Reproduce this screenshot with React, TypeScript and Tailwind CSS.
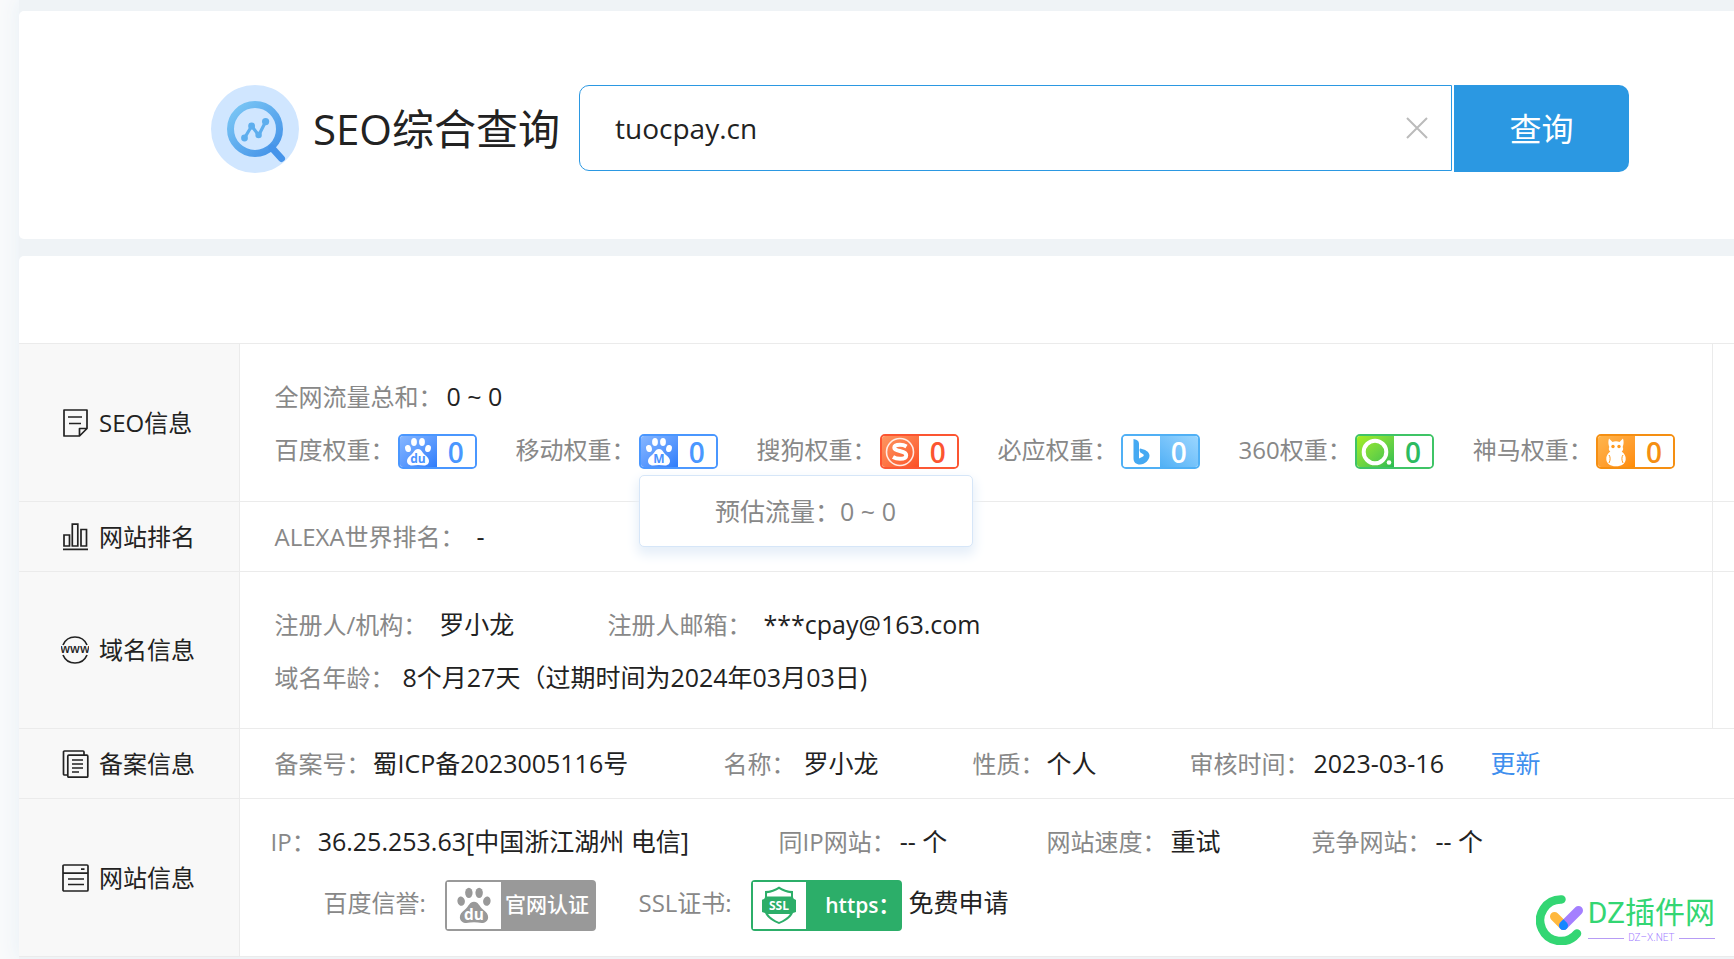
import type { ReactNode } from "react";

const sans = "font-['Open_Sans','Noto_Sans_CJK_SC',sans-serif]";

function SearchLogo() {
  return (
    <svg viewBox="0 0 88 88" className="size-[88px] shrink-0" fill="none">
      <defs>
        <linearGradient id="lens" x1="20" y1="20" x2="72" y2="76" gradientUnits="userSpaceOnUse">
          <stop stopColor="#7cc8f5" />
          <stop offset="1" stopColor="#3c8ae6" />
        </linearGradient>
      </defs>
      <circle cx="44" cy="44" r="44" fill="#d0e6ff" />
      <circle cx="44" cy="44" r="24.5" stroke="url(#lens)" strokeWidth="7" />
      <path d="M61 63l9.5 10.5" stroke="#4694ea" strokeWidth="7" strokeLinecap="round" />
      <path d="M33.5 53l7.2-12 7 9.2 7-13.6" stroke="#5eaeee" strokeWidth="3.2" strokeLinejoin="round" />
      <g fill="#5eaeee">
        <circle cx="33.5" cy="53" r="3.4" />
        <circle cx="40.6" cy="41" r="3.4" />
        <circle cx="47.6" cy="50" r="3.2" />
        <circle cx="54.6" cy="36.6" r="3.6" />
      </g>
    </svg>
  );
}

function RowIcon({ children }: { children: ReactNode }) {
  return (
    <svg viewBox="0 0 28 28" className="size-7 shrink-0" fill="none" stroke="#222" strokeWidth="1.7">
      {children}
    </svg>
  );
}

const noteIcon = (
  <RowIcon>
    <path d="M26 1H3v26h15.500l7.500-7.500zM18.500 27v-7.500H26M7 8h14M8 14.500h12" strokeLinejoin="round" />
  </RowIcon>
);
const barsIcon = (
  <RowIcon>
    <path d="M3 12h5.500v11H3zM11.300 1.200h5.500V23h-5.500zM20 6.500h5.500V23H20zM2 26.300h25" />
  </RowIcon>
);
const wwwIcon = (
  <RowIcon>
    <path d="M2 9a13 13 0 0 1 24 0M2 19a13 13 0 0 0 24 0" />
    <text x="14" y="17" textAnchor="middle" fontSize="12" fontWeight="600" fill="#222" stroke="none">
      www
    </text>
  </RowIcon>
);
const filesIcon = (
  <RowIcon>
    <path d="M7 25H3.500a1 1 0 0 1-1-1V2a1 1 0 0 1 1-1H22a1 1 0 0 1 1 1v3" />
    <rect x="6.800" y="5.200" width="20" height="22" rx="1" />
    <path d="M11 10h11M11 14h11M11 18h11M11 22h7" />
  </RowIcon>
);
const panelIcon = (
  <RowIcon>
    <rect x="2" y="1" width="25" height="26" rx="1" />
    <path d="M2 9.200h25M20 5.200h3.500M7 15h16M7 20.500h16" />
  </RowIcon>
);

function Paw({ label, ink, className }: { label: string; ink: string; className: string }) {
  return (
    <svg viewBox="0 0 28 29" className={className} fill="currentColor">
      <ellipse cx="4" cy="11.500" rx="2.900" ry="3.600" transform="rotate(-12 4 11.500)" />
      <ellipse cx="10" cy="5" rx="2.900" ry="4" />
      <ellipse cx="18" cy="5" rx="2.900" ry="4" />
      <ellipse cx="24" cy="11.500" rx="2.900" ry="3.600" transform="rotate(12 24 11.500)" />
      <path d="M14 12c3.500 0 4 3.500 7 6 2.700 2 4 3.800 4 6 0 3-2.500 4.500-5 4.500-2 0-4-.500-6-.500s-4 .500-6 .500c-2.500 0-5-1.500-5-4.500 0-2.200 1.300-4 4-6 3-2.500 3.500-6 7-6z" />
      <text x="14" y="26" textAnchor="middle" fontSize="12" fontWeight="700" fill={ink}>
        {label}
      </text>
    </svg>
  );
}

const sogouIcon = (
  <svg viewBox="0 0 30 30" className="size-[30px]" fill="none" stroke="#fff">
    <circle cx="15" cy="15" r="13.500" strokeWidth="1.600" strokeOpacity=".85" />
    <path
      d="M21.500 9.500c-2-1.200-4.200-1.700-6.500-1.700-3.500 0-5.700 1-5.700 3 0 2.200 3 2.700 6.200 3.400 3.300.700 5.700 1.500 5.700 4 0 2.400-2.700 3.600-6.200 3.600-2.600 0-5-.600-7-1.800"
      strokeWidth="4"
    />
  </svg>
);
const bingIcon = (
  <svg viewBox="0 0 28 28" className="size-7" fill="#45a9f2">
    <path d="M6.500 1l2.700.800c1.800.700 2.800 2 2.800 4v14.700l4-2c1-.700 1-1.700.200-2.200l-2.400-1.600c-1.200-.800-1.800-4-.500-4.300 4.500 1 9.200 3 9.200 7.200 0 4.400-4.500 9-9.500 9-4 0-6.500-2.200-6.500-6z" />
  </svg>
);
const so360Icon = (
  <svg viewBox="0 0 36 34" className="h-[34px] w-9" fill="none">
    <circle cx="18" cy="17" r="11.300" stroke="#fff" strokeWidth="4" />
    <circle cx="32" cy="27.500" r="2.300" fill="#fff" />
  </svg>
);
const shenmaIcon = (
  <svg viewBox="0 0 24 30" className="h-[30px] w-6" fill="#fff">
    <path d="M5 1.500l3.500 3.500c2-1 5-1 7 0L19 1.500c1 3 .700 6-.300 8.500 1 2 .300 3.500-1 4.500 3 2 4.300 5 4 8-.400 4-4 6.800-9.700 6.800S2.700 26.500 2.300 22.500c-.300-3 1-6 4-8-1.300-1-2-2.500-1-4.500C4.300 7.500 4 4.500 5 1.500z" />
    <path d="M5 18c1.500 2 1.500 5 0 8M19 18c-1.500 2-1.500 5 0 8" stroke="#ff9a1f" fill="none" />
    <circle cx="9" cy="9.500" r="1.700" fill="#ff9a1f" />
    <circle cx="15" cy="9.500" r="1.700" fill="#ff9a1f" />
  </svg>
);

type WeightProps = {
  label: string;
  icon: ReactNode;
  frame: string;
  left: string;
  right: string;
  children?: ReactNode;
};

function Weight({ label, icon, frame, left, right, children }: WeightProps) {
  return (
    <li className="flex items-center gap-[3px]">
      <span className="text-[#888]">{label}：</span>
      <a href="#" className="relative mt-1 block">
        <span className={`flex h-[35px] w-[79px] overflow-hidden rounded-[5px] border-2 ${frame}`}>
          <span className={`flex flex-1 items-center justify-center ${left}`}>{icon}</span>
          <span className={`flex flex-1 items-center justify-center text-[28px] leading-none font-semibold ${right}`}>
            0
          </span>
        </span>
        {children}
      </a>
    </li>
  );
}

type FieldProps = { label: string; gap?: string; className?: string; children: ReactNode };

function Field({ label, gap = "", className = "", children }: FieldProps) {
  return (
    <div className={`shrink-0 ${className}`}>
      <span className="text-[#888]">{label}</span>
      <span className={`text-[25px] ${gap}`}>{children}</span>
    </div>
  );
}

type RowProps = { icon: ReactNode; title: string; wide?: boolean; children: ReactNode };

function Row({ icon, title, wide, children }: RowProps) {
  return (
    <tr className="border-b border-[#ebebeb]">
      <th scope="row" className="w-[220px] border-r border-[#ebebeb] bg-[#f8f8f8] pl-[42px] text-left font-normal">
        <span className="flex items-center gap-[10px]">
          {icon}
          {title}
        </span>
      </th>
      <td colSpan={wide ? 2 : 1} className="pl-[35px]">
        {children}
      </td>
      {!wide && <td className="w-[22px] border-l border-[#ebebeb]" />}
    </tr>
  );
}

function Watermark() {
  return (
    <div className="absolute right-[19px] bottom-3 flex items-center gap-1 font-[Roboto,'Noto_Sans_CJK_SC',sans-serif]">
      <svg viewBox="0 0 48 50" className="h-[50px] w-12" fill="none" strokeLinecap="round">
        <path d="M25.500 4.500a20.800 20.800 0 1 0 15.500 34" stroke="#33d673" strokeWidth="8.500" />
        <path d="M18.500 21.500l9 9" stroke="#ffb83d" strokeWidth="9" />
        <path d="M27.500 30.500L42.500 15.500" stroke="#a47fff" strokeWidth="9" />
        <path d="M27.500 24.200l3.200 3.200a4.500 4.500 0 1 1-6.400 0z" fill="#1687ff" />
      </svg>
      <div>
        <p className="h-9 text-[30px] leading-[34px] text-[#33d673]">DZ插件网</p>
        <p className="flex items-center gap-1 text-[10px] leading-3 font-light text-[#a47fff]">
          <span className="h-px flex-1 bg-[#b79cf5]" />
          DZ–X.NET
          <span className="h-px flex-1 bg-[#b79cf5]" />
        </p>
      </div>
    </div>
  );
}

export default function App() {
  return (
    <div className={`min-h-screen overflow-x-hidden bg-[#f9fafb] pl-[19px] text-[24px] text-[#222] ${sans}`}>
      <main className="min-h-screen bg-[#eff3f6] pt-[11px] shadow-[0_0_20px_#e6eff5]">
        <section className="rounded-l-[5px] bg-white pt-[74px] pb-[66px]">
          <form className="mr-[105px] ml-48 flex items-start" onSubmit={(e) => e.preventDefault()}>
            <SearchLogo />
            <label htmlFor="domain" className="ml-[14px] shrink-0 text-[42px] leading-[88px]">
              SEO综合查询
            </label>
            <div className="relative ml-[19px] flex-1">
              <input
                id="domain"
                defaultValue="tuocpay.cn"
                className="block h-[86px] w-full rounded-l-[10px] border border-[#2b98e2] bg-white pr-20 pl-[35px] text-[28px] outline-none"
              />
              <button type="button" aria-label="清除" className="absolute inset-y-0 right-6 my-auto size-[22px]">
                <svg viewBox="0 0 22 22" className="size-full" stroke="#bbb" strokeWidth="2">
                  <path d="M1 1l20 20M21 1L1 21" />
                </svg>
              </button>
            </div>
            <button type="submit" className="ml-0.5 h-[87px] w-[175px] rounded-r-[10px] bg-[#2b98e2] text-[32px] text-white">
              查询
            </button>
          </form>
        </section>

        <section className="relative mt-[17px] rounded-tl-[5px] bg-white pt-[87px]">
          <table className="w-full border-collapse border-t border-[#ebebeb] whitespace-nowrap">
            <tbody>
              <Row icon={noteIcon} title="SEO信息">
                <div className="pt-[26px] pb-[25px] leading-[53px]">
                  <Field label="全网流量总和：" gap="ml-1">
                    0 ~ 0
                  </Field>
                  <ul className="flex h-[53px] gap-[39px]">
                    <Weight
                      label="百度权重"
                      icon={<Paw label="du" ink="#4b93ff" className="h-[29px] w-7" />}
                      frame="border-[#4a97ff]"
                      left="bg-linear-to-br from-[#86b6ff] to-[#2f7dfb] text-white"
                      right="bg-white text-[#4a97ff]"
                    />
                    <Weight
                      label="移动权重"
                      icon={<Paw label="M" ink="#4b93ff" className="h-[29px] w-7" />}
                      frame="border-[#4a97ff]"
                      left="bg-linear-to-br from-[#86b6ff] to-[#2f7dfb] text-white"
                      right="bg-white text-[#4a97ff]"
                    >
                      <span className="absolute top-[41px] left-0 z-10 flex h-[72px] w-[334px] items-center justify-center rounded-[5px] border border-[#d6e6f8] bg-white text-[25px] text-[#888] shadow-[0_6px_12px_2px_#e6eff9]">
                        预估流量：0 ~ 0
                      </span>
                    </Weight>
                    <Weight
                      label="搜狗权重"
                      icon={sogouIcon}
                      frame="border-[#fc5531]"
                      left="bg-linear-to-br from-[#fd9660] to-[#fb4f25]"
                      right="bg-white text-[#fc5531]"
                    />
                    <Weight
                      label="必应权重"
                      icon={bingIcon}
                      frame="border-[#50b0f5]"
                      left="bg-white"
                      right="bg-linear-to-tr from-[#50b0f5] to-[#9ad6ff] text-white"
                    />
                    <Weight
                      label="360权重"
                      icon={so360Icon}
                      frame="border-[#3fc466]"
                      left="bg-linear-to-br from-[#a4ee1c] to-[#25bd50]"
                      right="bg-white text-[#2dbb60]"
                    />
                    <Weight
                      label="神马权重"
                      icon={shenmaIcon}
                      frame="border-[#f58f12]"
                      left="bg-linear-to-br from-[#ffb54c] to-[#ff8c00]"
                      right="bg-white text-[#f58f12]"
                    />
                  </ul>
                </div>
              </Row>

              <Row icon={barsIcon} title="网站排名">
                <Field className="py-2 leading-[53px]" label="ALEXA世界排名：" gap="ml-3">
                  -
                </Field>
              </Row>

              <Row icon={wwwIcon} title="域名信息">
                <div className="pt-[26px] pb-[24px] leading-[53px]">
                  <div className="flex">
                    <Field className="w-[333px]" label="注册人/机构：" gap="ml-3">
                      罗小龙
                    </Field>
                    <Field label="注册人邮箱：" gap="ml-3">
                      ***cpay@163.com
                    </Field>
                  </div>
                  <Field label="域名年龄：" gap="ml-2">
                    8个月27天（过期时间为2024年03月03日)
                  </Field>
                </div>
              </Row>

              <Row icon={filesIcon} title="备案信息" wide>
                <div className="flex py-2 leading-[53px]">
                  <Field className="w-[449px]" label="备案号：" gap="ml-0.5">
                    蜀ICP备2023005116号
                  </Field>
                  <Field className="w-[249px]" label="名称：" gap="ml-2">
                    罗小龙
                  </Field>
                  <Field className="w-[217px]" label="性质：" gap="ml-0.5">
                    个人
                  </Field>
                  <Field className="w-[301px]" label="审核时间：" gap="ml-1">
                    2023-03-16
                  </Field>
                  <a href="#" className="text-[25px] text-[#3f8fee]">
                    更新
                  </a>
                </div>
              </Row>

              <Row icon={panelIcon} title="网站信息" wide>
                <div className="-ml-1 pt-4 pb-[18px]">
                  <div className="flex leading-[53px]">
                    <Field className="w-[508px]" label="IP：" gap="ml-0.5">
                      36.25.253.63[中国浙江湖州 电信]
                    </Field>
                    <Field className="w-[268px]" label="同IP网站：" gap="ml-1">
                      -- 个
                    </Field>
                    <Field className="w-[265px]" label="网站速度：" gap="ml-1">
                      <a href="#">重试</a>
                    </Field>
                    <Field label="竞争网站：" gap="ml-1">
                      -- 个
                    </Field>
                  </div>
                  <div className="flex h-[70px] items-center pl-[53px]">
                    <span className="w-[121px] text-[#888]">百度信誉:</span>
                    <a href="#" className="mt-1 flex h-[51px] w-[151px] rounded-sm border-2 border-[#999] bg-[#999] text-white">
                      <span className="flex w-[54px] items-center justify-center bg-white">
                        <Paw label="du" ink="#fff" className="h-[38px] w-9 text-[#999]" />
                      </span>
                      <span className="flex flex-1 items-center justify-center text-[21px] font-medium">官网认证</span>
                    </a>
                    <span className="ml-[43px] w-[112px] text-[#888]">SSL证书:</span>
                    <a href="#" className="mt-1 flex h-[51px] w-[151px] rounded-sm border-2 border-[#2cae69] bg-[#2cae69] text-white">
                      <span className="flex w-[54px] items-center justify-center bg-white">
                        <svg viewBox="0 0 38 40" className="h-10 w-[38px]">
                          <path
                            d="M19 1.500c3.500 2.500 9 4.500 14 4.500v6c0 2 2 2 3 3v12l-3 1c-2 5-8 8.500-14 11-6-2.500-12-6-14-11l-3-1V15c1-1 3-1 3-3V6c5 0 10.500-2 14-4.500z"
                            fill="#2cae69"
                          />
                          <path d="M19 4c3.500 2.300 8 3.800 12 4.200v3.300H7V8.200C11 7.800 15.500 6.300 19 4zM8 29h22c-2.500 3.500-6.500 6-11 8-4.500-2-8.500-4.500-11-8z" fill="#fff" />
                          <text x="19" y="24.500" textAnchor="middle" fontSize="12" fontWeight="700" fill="#fff">
                            SSL
                          </text>
                        </svg>
                      </span>
                      <span className="flex-1 pl-[19px] text-[21px] leading-[46px] font-semibold">https：</span>
                    </a>
                    <a href="#" className="ml-[7px] text-[25px]">
                      免费申请
                    </a>
                  </div>
                </div>
              </Row>
            </tbody>
          </table>
          <Watermark />
        </section>
      </main>
    </div>
  );
}
